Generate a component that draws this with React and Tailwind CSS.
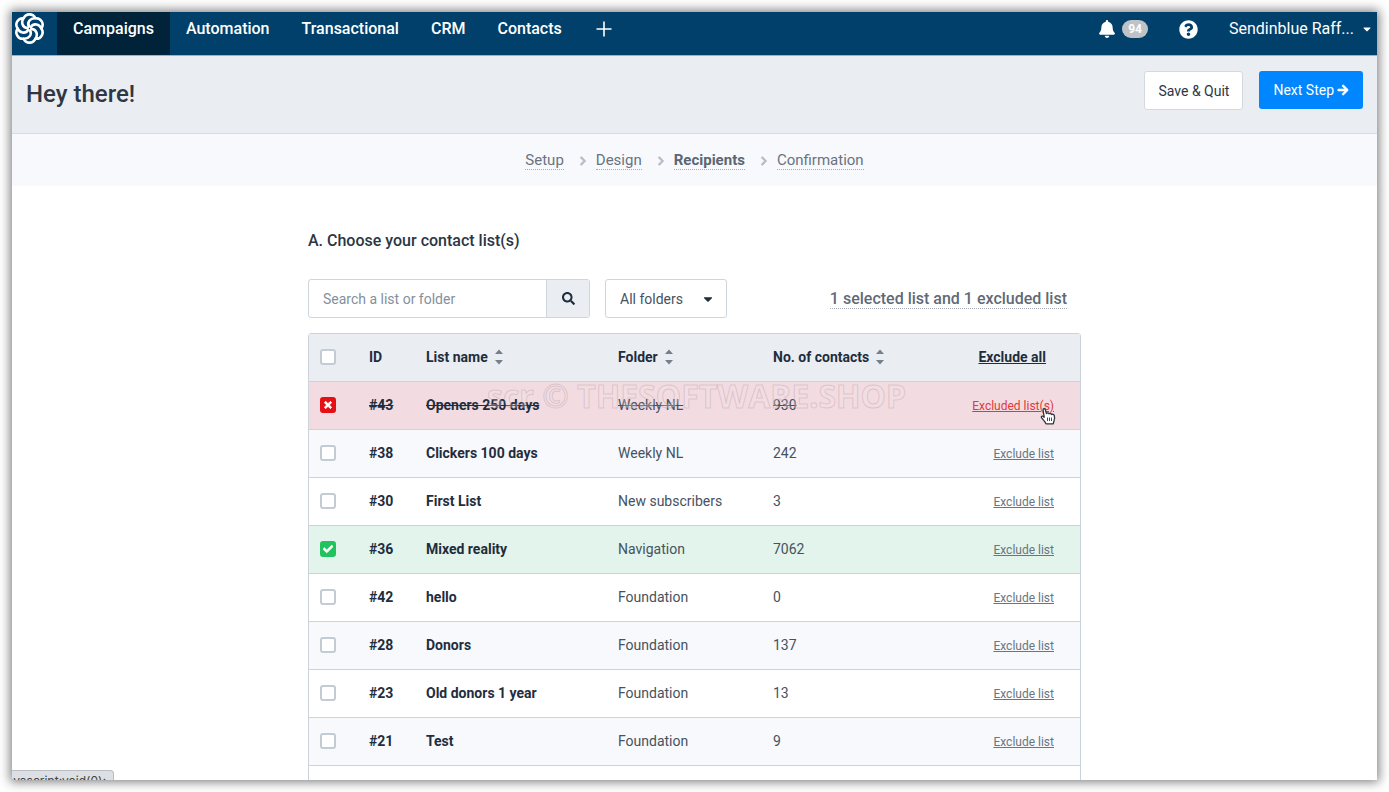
import { useState } from "react";
import { FaArrowRight, FaBell, FaCaretDown, FaCheck, FaChevronRight, FaQuestionCircle, FaSearch, FaTimes } from "react-icons/fa";

const NAV = ["Campaigns", "Automation", "Transactional", "CRM", "Contacts"];
const STEPS = ["Setup", "Design", "Recipients", "Confirmation"];

const LISTS = [
  { id: 43, name: "Openers 250 days", folder: "Weekly NL", contacts: 930 },
  { id: 38, name: "Clickers 100 days", folder: "Weekly NL", contacts: 242 },
  { id: 30, name: "First List", folder: "New subscribers", contacts: 3 },
  { id: 36, name: "Mixed reality", folder: "Navigation", contacts: 7062 },
  { id: 42, name: "hello", folder: "Foundation", contacts: 0 },
  { id: 28, name: "Donors", folder: "Foundation", contacts: 137 },
  { id: 23, name: "Old donors 1 year", folder: "Foundation", contacts: 13 },
  { id: 21, name: "Test", folder: "Foundation", contacts: 9 },
];

function Logo() {
  return (
    <svg viewBox="0 0 30 30" className="size-[31px]" fill="none" stroke="currentColor" strokeWidth="2.5" strokeLinecap="round" aria-hidden="true">
      {[0, 60, 120, 180, 240, 300].map(a => (
        <path key={a} transform={`rotate(${a} 15 15)`} d="M9.3 5.1 A6.2 6.2 0 0 1 20.7 5.1 M20.7 5.1 C16.2 4.6 12.2 8.6 14.4 13.2" />
      ))}
    </svg>
  );
}

function SortIcon() {
  return (
    <svg viewBox="0 0 8 16" className="h-4 w-2 text-[#76808b]" fill="currentColor" aria-hidden="true">
      <path d="M4 .5 8 5H0zM4 15.5 0 11h8z" />
    </svg>
  );
}

function SortHeader({ children }) {
  return (
    <button className="flex items-center gap-[7px] font-bold">
      {children}
      <SortIcon />
    </button>
  );
}

function Check({ label, state, onChange }) {
  const tone = state === "excluded" ? "border-[#e60f14] bg-[#e60f14]" : state === "selected" ? "border-[#22c35f] bg-[#22c35f]" : "border-[#c3cbd4] bg-white";
  return (
    <label className="relative flex size-4 items-center justify-center">
      <input type="checkbox" aria-label={label} checked={!!state} onChange={onChange} className={`size-4 appearance-none rounded-[3px] border-2 ${tone}`} />
      {state === "excluded" && <FaTimes strokeWidth={50} className="pointer-events-none absolute size-[10px] stroke-white text-white" />}
      {state === "selected" && <FaCheck strokeWidth={40} className="pointer-events-none absolute size-[10px] stroke-white text-white" />}
    </label>
  );
}

function HandCursor() {
  return (
    <svg viewBox="0 0 16 18" className="pointer-events-none absolute top-[25px] right-[24px] h-[18px] w-4" fill="#fff" stroke="#2d3540" strokeWidth="1.3" strokeLinejoin="round" aria-hidden="true">
      <path d="M6 16.8c-.6-1.6-1.6-2.6-2.7-4C2.4 11.6 1 10.6 1.3 9.7c.5-1 1.7-.7 2.9.5L3.1 3.1C2.8 1.4 4.7 1 5.2 2.5L6.5 6.6c.8-1 2.2-.8 2.5.3.8-.8 2.1-.5 2.4.6 1-.6 2.5-.1 2.8.8.7 2.2.8 3.8-.2 5.7l-.8 2.8z" />
      <path d="M7.5 10.5v3.5M9.5 10.5v3.5M11.5 10.5v3.5" strokeWidth=".9" />
    </svg>
  );
}

function ListRow({ list, state, onToggle, onExclude, children }) {
  const excluded = state === "excluded";
  const bg = excluded ? "bg-[#f2dce1]" : state === "selected" ? "bg-[#e2f4eb]" : "odd:bg-white even:bg-[#f7f9fd]";
  const strike = excluded ? "line-through" : "";
  return (
    <tr className={`h-12 border-b border-[#cdd3da] ${bg}`}>
      <td className="pl-[11px]"><Check label={`Select ${list.name}`} state={state} onChange={onToggle} /></td>
      <td className={`font-bold text-[#1f2d3d] ${strike}`}>#{list.id}</td>
      <td className={`font-bold text-[#1f2d3d] ${strike}`}>{list.name}</td>
      <td className={strike}>{list.folder}</td>
      <td className={strike}>{list.contacts}</td>
      <td className="relative pr-[26px] text-right">
        <button onClick={onExclude} className={`text-xs underline ${excluded ? "text-[#e0383d]" : "text-[#6b7580]"}`}>{excluded ? "Excluded list(s)" : "Exclude list"}</button>
        {children}
      </td>
    </tr>
  );
}

export default function App() {
  const [states, setStates] = useState({ 43: "excluded", 36: "selected" });
  const [search, setSearch] = useState("");
  const toggle = (id, value) => setStates(s => ({ ...s, [id]: s[id] ? undefined : value }));

  return (
    <div className="h-screen bg-white p-3 font-['Roboto',sans-serif] text-[#46525f]">
      <div className="relative h-full overflow-hidden bg-white shadow-[0_0_10px_2px_rgba(0,0,0,0.5)]">
        <header className="flex h-11 items-stretch border-b border-[#8fb4d4] bg-[#00406a] font-medium text-white">
          <a href="#" aria-label="Home" className="flex w-[45px] items-start pt-px pl-[2px]"><Logo /></a>
          <nav className="flex">
            {NAV.map((item, i) => (
              <a key={item} href="#" className={`flex items-center px-4 pb-[10px] text-base ${i === 0 ? "bg-[#00233a]" : ""}`}>{item}</a>
            ))}
          </nav>
          <button aria-label="Add app" className="flex items-center px-[18px] pb-[9px]">
            <svg viewBox="0 0 16 16" className="size-4" stroke="currentColor" strokeWidth="1.6" aria-hidden="true"><path d="M8 .5v15M.5 8h15" /></svg>
          </button>
          <div className="ml-auto flex items-center pr-1 pb-[9px]">
            <button aria-label="Notifications" className="flex items-center gap-[6px]">
              <FaBell className="size-[18px]" />
              <span className="rounded-full bg-[#bfc2c7] px-[6px] text-xs leading-[18px] font-bold">94</span>
            </button>
            <button aria-label="Help" className="ml-[31px]"><FaQuestionCircle className="size-[19px]" /></button>
            <button className="ml-[31px] flex items-center gap-[7px] text-base font-normal">
              Sendinblue Raff...
              <FaCaretDown className="size-3" />
            </button>
          </div>
        </header>

        <div className="flex h-[78px] items-start justify-between border-b border-[#d7dde3] bg-[#eaeef3] px-[14px] pt-[15px]">
          <h1 className="pt-[7px] text-2xl font-medium text-[#2f3743]">Hey there!</h1>
          <div className="flex gap-4 text-sm">
            <button className="h-[39px] rounded-[3px] border border-[#d3d9df] bg-white px-[13px] text-[#2b3643]">Save &amp; Quit</button>
            <button className="flex h-[38px] items-center gap-[3px] rounded-[3px] bg-[#0086ff] px-[14px] text-white">Next Step <FaArrowRight strokeWidth={30} className="size-3 stroke-white" /></button>
          </div>
        </div>

        <ol className="flex h-[52px] items-center justify-center bg-[#f7f9fd] pt-px text-[15px] text-[#6a737e]">
          {STEPS.map((step, i) => (
            <li key={step} className="flex items-center">
              {i > 0 && <FaChevronRight strokeWidth={40} className="mr-2 ml-[14px] size-[10px] stroke-[#b3bcc6] text-[#b3bcc6]" />}
              <a href="#" className={`border-b border-dotted border-[#a4adb7] leading-[18px] ${step === "Recipients" ? "font-bold text-[#5b6672]" : ""}`}>{step}</a>
            </li>
          ))}
        </ol>

        <main className="mx-auto w-full max-w-[773px] pt-[43px]">
          <h2 className="text-base font-medium text-[#2b3643]">A. Choose your contact list(s)</h2>
          <div className="mt-[26px] flex h-[39px] items-center gap-[15px] text-sm">
            <form className="flex h-full w-[282px] overflow-hidden rounded-[3px] border border-[#cdd5dd]" onSubmit={e => e.preventDefault()}>
              <input value={search} onChange={e => setSearch(e.target.value)} aria-label="Search a list or folder" placeholder="Search a list or folder" className="min-w-0 flex-1 px-[14px] outline-none placeholder:text-[#84909c]" />
              <button aria-label="Search" className="flex w-[43px] items-center justify-center border-l border-[#cdd5dd] bg-[#eaeef3] text-[#1f2d3d]"><FaSearch className="size-[13px]" /></button>
            </form>
            <div className="relative flex h-full items-center">
              <select aria-label="Folder" className="h-full w-[122px] appearance-none rounded-[3px] border border-[#cdd5dd] bg-white px-[14px]">
                <option>All folders</option>
              </select>
              <FaCaretDown className="pointer-events-none absolute right-3 size-[14px] text-[#1f2d3d]" />
            </div>
            <a href="#" className="mr-[14px] ml-auto border-b border-dotted border-[#a4adb7] text-base leading-[19px] font-medium text-[#5f6a76]">1 selected list and 1 excluded list</a>
          </div>

          <div className="relative mt-[15px] h-[500px] rounded-t-[3px] border border-[#cdd3da]">
            <table className="w-full table-fixed border-collapse text-left text-sm">
              <thead>
                <tr className="h-[47px] border-b border-[#cdd3da] bg-[#eaeef3] text-[#1f2d3d]">
                  <th className="w-[60px] pl-[11px]"><Check label="Select all lists" onChange={() => {}} /></th>
                  <th className="w-[57px]">ID</th>
                  <th className="w-[192px]"><SortHeader>List name</SortHeader></th>
                  <th className="w-[155px]"><SortHeader>Folder</SortHeader></th>
                  <th className="w-[155px]"><SortHeader>No. of contacts</SortHeader></th>
                  <th className="pr-[34px] text-right"><button className="font-bold underline">Exclude all</button></th>
                </tr>
              </thead>
              <tbody>
                {LISTS.map(list => (
                  <ListRow key={list.id} list={list} state={states[list.id]} onToggle={() => toggle(list.id, "selected")} onExclude={() => toggle(list.id, "excluded")}>
                    {list.id === 43 && <HandCursor />}
                  </ListRow>
                ))}
              </tbody>
            </table>
            <span className="pointer-events-none absolute top-[42px] left-[178px] font-['Open_Sans',sans-serif] text-[32px] leading-10 font-bold whitespace-nowrap text-[#f4e2e6]/30 [-webkit-text-stroke:1px_rgba(120,90,100,0.2)]">scr © THESOFTWARE.SHOP</span>
          </div>
        </main>

        <div className="absolute bottom-0 left-0 flex h-[10px] w-[102px] justify-end overflow-hidden rounded-tr-[4px] border-t border-r border-[#b9bcc0] bg-[#dcdfe3] pr-[7px] font-['Inter',sans-serif] text-xs leading-5 text-[#3f444a]">
          javascript:void(0);
        </div>
      </div>
    </div>
  );
}
